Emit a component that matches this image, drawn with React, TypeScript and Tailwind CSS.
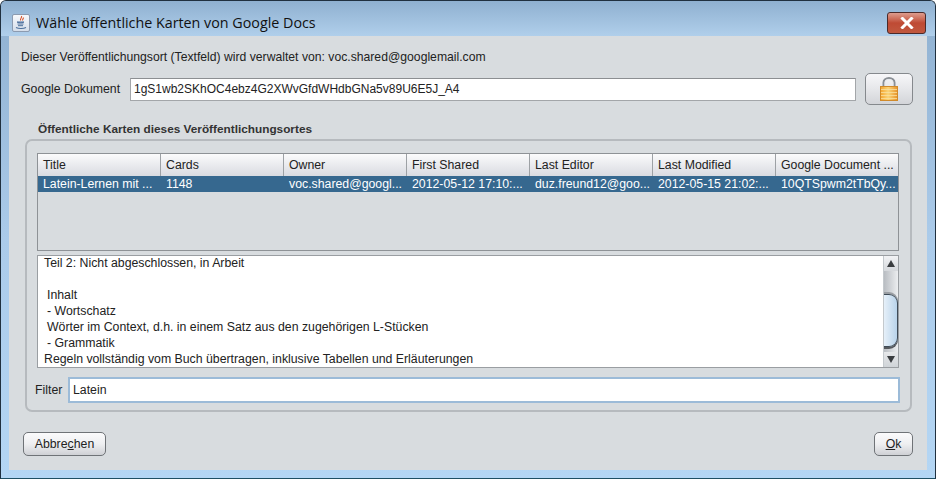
const columns = ['Title', 'Cards', 'Owner', 'First Shared', 'Last Editor', 'Last Modified', 'Google Document ...']
const row = ['Latein-Lernen mit ...', '1148', 'voc.shared@googl...', '2012-05-12 17:10:...', 'duz.freund12@goo...', '2012-05-15 21:02:...', '10QTSpwm2tTbQy...']

const description = [
  { text: 'Teil 2: Nicht abgeschlossen, in Arbeit' },
  { text: '\u00a0' },
  { text: 'Inhalt', indent: true },
  { text: '- Wortschatz', indent: true },
  { text: 'Wörter im Context, d.h. in einem Satz aus den zugehörigen L-Stücken', indent: true },
  { text: '- Grammatik', indent: true },
  { text: 'Regeln vollständig vom Buch übertragen, inklusive Tabellen und Erläuterungen' },
]

function JavaIcon() {
  return (
    <div className="w-[18px] h-[18px] rounded-[2px] border border-[#8c9bb0] bg-gradient-to-b from-[#f7f9fc] to-[#d5deea] flex items-center justify-center">
      <svg width="14" height="15" viewBox="0 0 14 15">
        <path d="M7.5 1c1 1.5-2 2.5-.8 4.5M9.3 2.5c.6 1-1.3 1.8-.6 3" fill="none" stroke="#d9542b" strokeWidth="1.1" />
        <path d="M3 7h7c0 .8-7 .8-7 0zM3.5 9h6M4 10.7h5" fill="none" stroke="#4b6f9c" strokeWidth="1" />
        <path d="M2 12.6c2.5 1.2 7.5 1.2 10 0" fill="none" stroke="#4b6f9c" strokeWidth="1.1" />
      </svg>
    </div>
  )
}

function LockIcon() {
  return (
    <svg width="18" height="24" viewBox="0 0 18 24">
      <defs>
        <linearGradient id="lockBody" x1="0" y1="0" x2="1" y2="0">
          <stop offset="0" stopColor="#f3a52f" />
          <stop offset="0.45" stopColor="#fbd477" />
          <stop offset="1" stopColor="#e8932a" />
        </linearGradient>
      </defs>
      <path d="M3.5 10V5.5a5.5 4.5 0 0 1 11 0V10" fill="none" stroke="#8a8f95" strokeWidth="2" />
      <path d="M5 10V5.5a4 3.2 0 0 1 8 0V10" fill="none" stroke="#e6e8eb" strokeWidth="0.8" />
      <rect x="0.5" y="9.5" width="17" height="14" fill="url(#lockBody)" stroke="#d08a2a" />
      <path d="M1 12.5h16M1 15.5h16M1 18.5h16M1 21.5h16" stroke="#f9e0a0" strokeWidth="0.8" />
    </svg>
  )
}

function CloseIcon() {
  return (
    <svg width="14" height="12" viewBox="0 0 14 12">
      <path d="M2.5 1.5l9 9M11.5 1.5l-9 9" stroke="#ffffff" strokeWidth="3" strokeLinecap="square" />
    </svg>
  )
}

function Scrollbar() {
  return (
    <div className="w-[15px] shrink-0 flex flex-col bg-[#d9dde0] border-l border-[#c4c9cd]">
      <div className="h-[15px] flex items-center justify-center bg-gradient-to-b from-[#f2f3f5] to-[#d5d8dc]">
        <div className="w-0 h-0 border-x-[4px] border-x-transparent border-b-[7px] border-b-[#3a3d40]" />
      </div>
      <div className="flex-1 flex flex-col justify-end bg-gradient-to-r from-[#b9bdc2] to-[#eceef0] pb-[5px]">
        <div className="h-[53px] rounded-r-[9px] border-y border-r border-[#3f4b57] bg-gradient-to-r from-[#e6f0f9] to-[#b9d3ea] shadow-[0_2px_0_#55595e,0_-2px_0_#9a9ea3]" />
      </div>
      <div className="h-[15px] flex items-center justify-center bg-gradient-to-b from-[#e6e8ea] to-[#d0d4d8]">
        <div className="w-0 h-0 border-x-[4px] border-x-transparent border-t-[7px] border-t-[#3a3d40]" />
      </div>
    </div>
  )
}

function DialogButton({ children, className }: { children: React.ReactNode; className: string }) {
  return (
    <button className={`h-[24px] rounded-[5px] border border-[#6f7377] bg-gradient-to-b from-[#fbfbfc] via-[#eeeff1] to-[#cfd1d5] text-[12.3px] text-[#222] ${className}`}>
      {children}
    </button>
  )
}

export default function App() {
  return (
    <div className="w-[936px] h-[479px] flex flex-col rounded-t-[6px] border border-[#20303f] border-b-[#1f4f63] bg-gradient-to-b from-[#8fb0d0] via-[#abcbea] to-[#b4d6f4] font-['Liberation_Sans',sans-serif] text-[12.3px] text-[#222] overflow-hidden">
      {/* title bar */}
      <div className="h-[35px] shrink-0 flex items-center pt-[8px] pl-[11px] pr-[9px] bg-gradient-to-b from-[#8fb0d0] to-[#b0cfeb]">
        <JavaIcon />
        <span className="ml-[6px] font-['Open_Sans',sans-serif] text-[14.3px] text-[#111] whitespace-nowrap">Wähle öffentliche Karten von Google Docs</span>
        <div className="ml-auto w-[39px] h-[22px] flex items-center justify-center rounded-[3px] border border-[#4b2a2a] bg-gradient-to-b from-[#dd9c8e] via-[#bf4a34] to-[#c0583f]">
          <CloseIcon />
        </div>
      </div>

      {/* dialog body */}
      <div className="flex-1 mx-[8px] mb-[8px] bg-[#d8dcdf] flex flex-col px-[12px]">
        <div className="h-[18px] mt-[12px] flex items-center text-[12.2px] whitespace-nowrap">
          Dieser Veröffentlichungsort (Textfeld) wird verwaltet von: voc.shared@googlemail.com
        </div>

        <div className="mt-[7px] h-[32px] flex items-center pr-[2px]">
          <span className="w-[109px] shrink-0 whitespace-nowrap">Google Dokument</span>
          <div className="w-[726px] h-[23px] flex items-center px-[3px] text-[12px] bg-white border border-[#a3a6a9] border-t-[#8c8f92]">
            1gS1wb2SKhOC4ebz4G2XWvGfdWHdbGNa5v89U6E5J_A4
          </div>
          <button className="ml-[9px] w-[48px] h-[32px] flex items-center justify-center rounded-[5px] border border-[#85898d] bg-gradient-to-b from-[#f7f7f9] via-[#e6e7ea] to-[#d3d5d9]">
            <LockIcon />
          </button>
        </div>

        {/* public cards group */}
        <div className="mt-[18px] pl-[17px] h-[14px] flex items-center font-bold text-[11.8px] text-[#333] whitespace-nowrap">
          Öffentliche Karten dieses Veröffentlichungsortes
        </div>
        <div className="mt-[2px] ml-[4px] w-[887px] h-[273px] rounded-[7px] border-2 border-[#b6babe] px-[10px] pt-[12px] flex flex-col">
          <div className="w-[862px] h-[98px] shrink-0 border border-[#8e9296] overflow-hidden">
            <div className="grid grid-cols-[repeat(7,123px)] h-[22px]">
              {columns.map((col) => (
                <div key={col} className="flex items-center pl-[5px] border-r border-[#9da1a5] bg-gradient-to-b from-[#fbfbfc] to-[#d9dbe1] whitespace-nowrap overflow-hidden">
                  {col}
                </div>
              ))}
            </div>
            <div className="grid grid-cols-[repeat(7,123px)] h-[16px] bg-[#36688f] text-white">
              {row.map((cell) => (
                <div key={cell} className="flex items-center pl-[5px] whitespace-nowrap overflow-hidden">
                  {cell}
                </div>
              ))}
            </div>
          </div>

          <div className="mt-[4px] w-[862px] h-[113px] shrink-0 flex bg-white border border-[#9a9ea2]">
            <div className="flex-1 pl-[6px] leading-[16px] overflow-hidden">
              <div className="-mt-[1px]">
                {description.map((line, i) => (
                  <div key={i} className={line.indent ? 'h-[16px] pl-[3px] whitespace-nowrap' : 'h-[16px] whitespace-nowrap'}>
                    {line.text}
                  </div>
                ))}
              </div>
            </div>
            <Scrollbar />
          </div>

          <div className="mt-[9px] -ml-[2px] flex items-center">
            <span className="w-[33px] shrink-0">Filter</span>
            <div className="w-[832px] h-[26px] flex items-center px-[3px] bg-white border-2 border-[#9cbbd8]">Latein</div>
          </div>
        </div>

        <div className="mt-[20px] flex justify-between px-[2px]">
          <DialogButton className="w-[83px]">
            Abbre<span className="underline">c</span>hen
          </DialogButton>
          <DialogButton className="w-[39px]">
            <span className="underline">O</span>k
          </DialogButton>
        </div>
      </div>
    </div>
  )
}
